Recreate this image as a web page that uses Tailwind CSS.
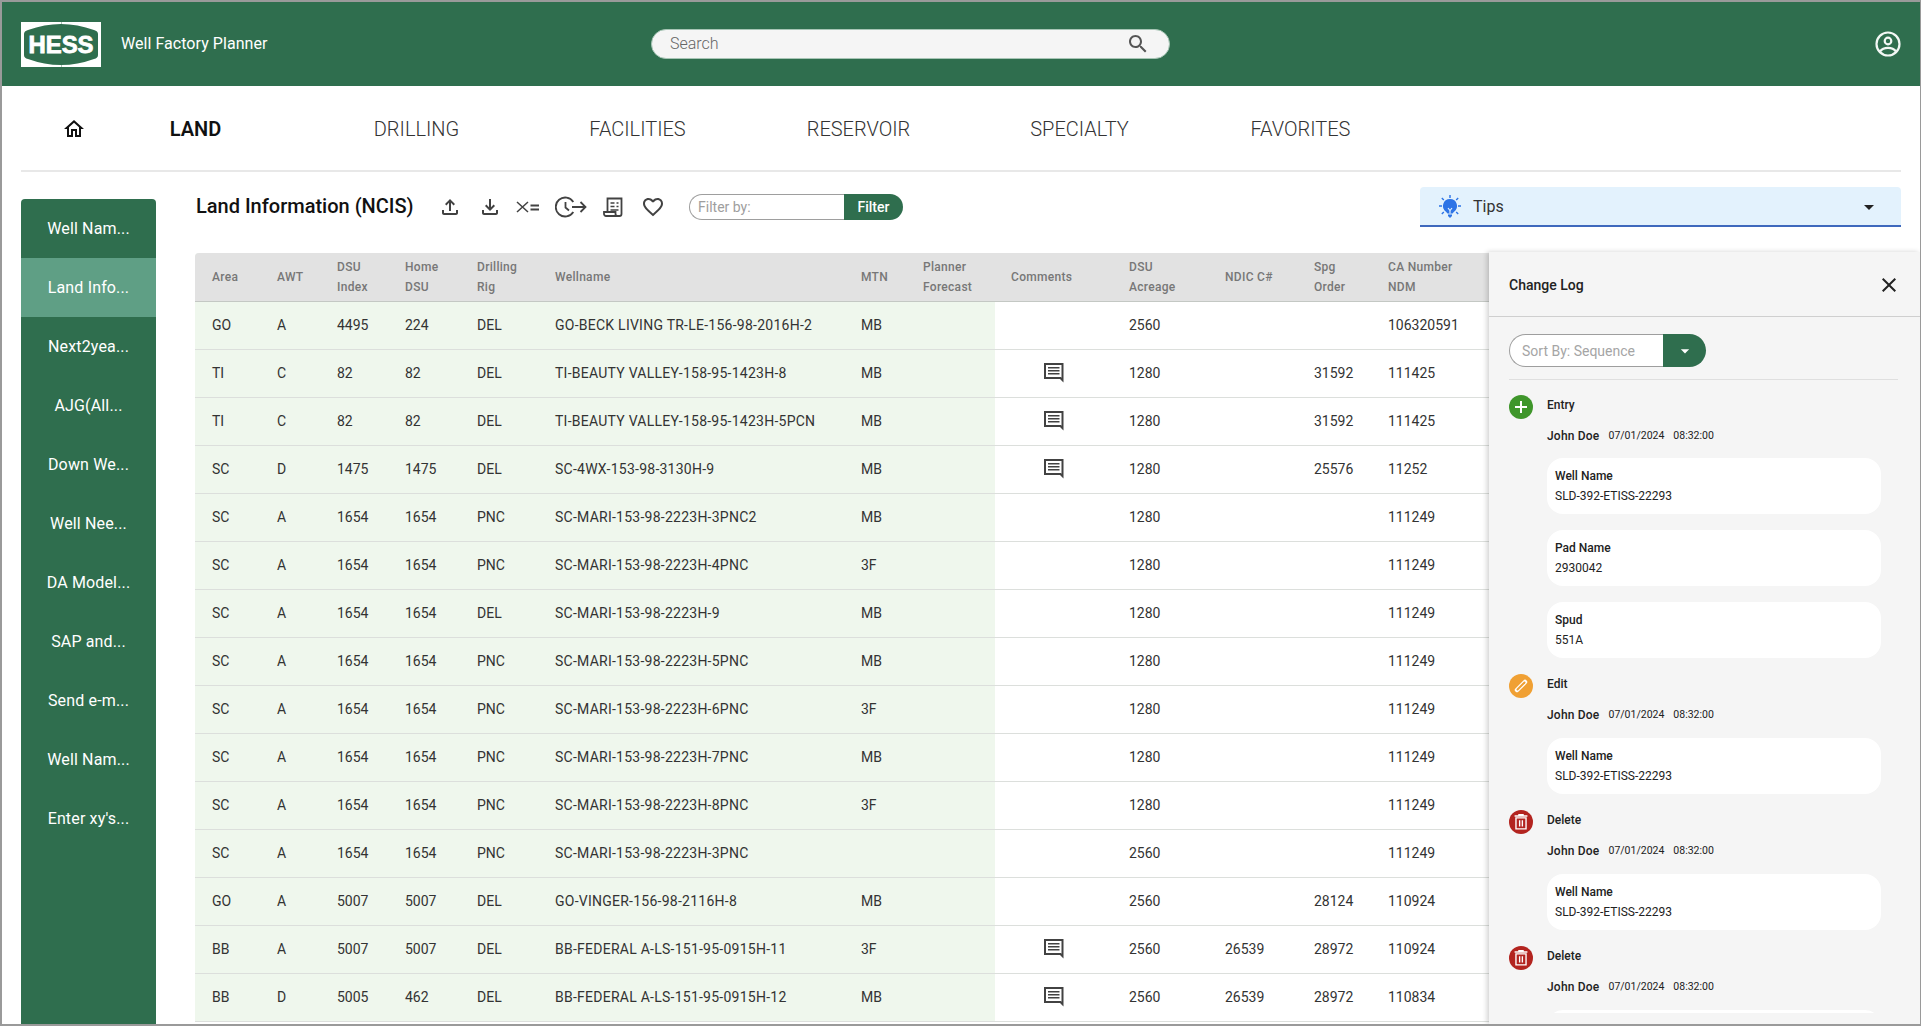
<!DOCTYPE html>
<html lang="en">
<head>
<meta charset="utf-8">
<title>Well Factory Planner</title>
<script src="https://cdn.jsdelivr.net/npm/@tailwindcss/browser@4"></script>
</head>
<body class="bg-white">
<svg class="hidden" xmlns="http://www.w3.org/2000/svg">
  <symbol id="cm" viewBox="0 0 24 24"><path fill="#424242" fill-rule="evenodd" d="M2 2h19.500v19.500L18 18H2zM4 4v12h14.800l.7.7V4zM6 6h11.500v1.500H6zM6 9h11.500v1.500H6zM6 12h11.500v1.500H6z"/></symbol>
  <symbol id="tr" viewBox="0 0 24 24"><g fill="none" stroke="#fff" stroke-width="1.500"><path d="M6.500 7.500h11v12h-11z"/><path d="M5 5.500h14M9 4h6M10.500 10v7M13.500 10v7"/></g></symbol>
</svg>
<div class="box-border w-[1921px] h-[1026px] overflow-hidden border-t-2 border-l-2 border-r border-b-2 border-[#9a9a9a] font-[family-name:Roboto,sans-serif] text-[#333]">

  <header class="h-[84px] bg-[#2f6e4e] flex items-center">
    <div class="w-[649px] pl-[19px] flex items-center">
      <svg width="80" height="45" viewBox="0 0 80 45" class="shrink-0">
        <rect width="80" height="45" fill="#fff"/>
        <path d="M3 12Q3 9 7 8Q40 -4 73 8Q77 9 77 12V33Q77 36 73 37Q40 49 7 37Q3 36 3 33Z" fill="#2f6e4e"/>
        <path d="M40.500 0v3M40.500 42v3" stroke="#2f6e4e" stroke-opacity="0.400"/>
        <text x="40" y="31" text-anchor="middle" textLength="65" lengthAdjust="spacingAndGlyphs" font-family="Liberation Sans" font-weight="700" font-size="23" fill="#fff" stroke="#fff" stroke-width="0.800">HESS</text>
      </svg>
      <span class="ml-5 text-base text-white tracking-[0.05px]">Well Factory Planner</span>
    </div>
    <div class="w-[519px] h-[30px] bg-[#f5f5f5] border border-[#a7c5b5] rounded-full flex items-center justify-between pl-[18px] pr-[19px]">
      <span class="text-base font-light text-[#666]">Search</span>
      <svg width="24" height="24" viewBox="0 0 24 24" fill="#555"><path d="M15.500 14h-.79l-.28-.27C15.410 12.590 16 11.110 16 9.500 16 5.910 13.090 3 9.500 3S3 5.910 3 9.500 5.910 16 9.500 16c1.610 0 3.090-.59 4.230-1.570l.27.28v.79l5 4.990L20.490 19l-4.990-5zm-6 0C7.010 14 5 11.990 5 9.500S7.010 5 9.500 5 14 7.010 14 9.500 11.990 14 9.500 14z"/></svg>
    </div>
    <div class="ml-auto pr-[18px] flex">
      <svg width="28" height="28" viewBox="0 0 28 28" fill="none" stroke="#f3f8f5" stroke-width="2.200"><circle cx="14" cy="14" r="11.500"/><circle cx="14" cy="11" r="3.300"/><path d="M6 21.500c2-2.800 5-3.700 8-3.700s6 .9 8 3.700"/></svg>
    </div>
  </header>

  <nav class="h-[84px] flex items-center pl-[59px] pt-[2px] text-[20px] font-light text-[#333]">
    <svg width="24" height="24" viewBox="0 0 24 24" fill="#111" class="shrink-0 ml-px -mr-px"><path d="M12 5.690l5 4.500V18h-2v-6H9v6H7v-7.810l5-4.500M12 3L2 12h3v8h6v-6h2v6h6v-8h3L12 3z"/></svg>
    <span class="w-[221px] text-center font-semibold text-[#111]">LAND</span>
    <span class="w-[221px] text-center">DRILLING</span>
    <span class="w-[221px] text-center">FACILITIES</span>
    <span class="w-[221px] text-center">RESERVOIR</span>
    <span class="w-[221px] text-center">SPECIALTY</span>
    <span class="w-[221px] text-center">FAVORITES</span>
  </nav>
  <div class="ml-[19px] w-[1880px] h-[2px] bg-[#e8e8e8]"></div>

  <div class="flex pl-[19px]">
    <aside class="w-[135px] h-[825px] mt-[27px] shrink-0 bg-[#2f6e4e] rounded-t text-white text-base text-center tracking-[0.15px]">
      <div class="h-[59px] flex items-center justify-center">Well Nam...</div>
      <div class="h-[59px] flex items-center justify-center bg-[#5f9f85]">Land Info...</div>
      <div class="h-[59px] flex items-center justify-center">Next2yea...</div>
      <div class="h-[59px] flex items-center justify-center">AJG(All...</div>
      <div class="h-[59px] flex items-center justify-center">Down We...</div>
      <div class="h-[59px] flex items-center justify-center">Well Nee...</div>
      <div class="h-[59px] flex items-center justify-center">DA Model...</div>
      <div class="h-[59px] flex items-center justify-center">SAP and...</div>
      <div class="h-[59px] flex items-center justify-center">Send e-m...</div>
      <div class="h-[59px] flex items-center justify-center">Well Nam...</div>
      <div class="h-[59px] flex items-center justify-center">Enter xy's...</div>
    </aside>

    <main class="ml-[39px] w-[1725px] pt-[15px]">
      <div class="h-[40px] flex items-center pl-px pr-[19px]">
        <h1 class="w-[218px] text-[20px] font-medium text-[#111] whitespace-nowrap mb-[2px]">Land Information (NCIS)</h1>
        <svg width="24" height="24" viewBox="0 0 24 24" fill="#424242" class="ml-6"><path d="M18 15v3H6v-3H4v3c0 1.100.9 2 2 2h12c1.100 0 2-.9 2-2v-3h-2zM7 9l1.410 1.410L11 7.830V16h2V7.830l2.590 2.580L17 9l-5-5-5 5z"/></svg>
        <svg width="24" height="24" viewBox="0 0 24 24" fill="#424242" class="ml-4"><path d="M18 15v3H6v-3H4v3c0 1.100.9 2 2 2h12c1.100 0 2-.9 2-2v-3h-2zm-1-4l-1.410-1.410L13 12.170V4h-2v8.170L8.410 9.590 7 11l5 5 5-5z"/></svg>
        <svg width="24" height="24" viewBox="0 0 24 24" fill="none" stroke="#424242" class="ml-[14px]"><path stroke-width="1.500" d="M1 7l11 10M12 7L1 17"/><path stroke-width="2" d="M14.500 10.500H23M14.500 14.500H23"/></svg>
        <svg width="32" height="24" viewBox="0 0 32 24" fill="none" stroke="#424242" stroke-width="1.800" class="ml-[15px]"><path d="M18.300 7A9.500 9.500 0 1 0 18.300 17"/><path d="M10.500 7v5.500l3.500 3M17 12h13.500M25.500 7l5 5-5 5"/></svg>
        <svg width="24" height="24" viewBox="0 0 24 24" fill="none" stroke="#424242" stroke-width="1.800" class="ml-[14px]"><path d="M6.500 17V3.500h14V19a2 2 0 0 1-2 2H5a2 2 0 0 1-2-2v-2h11.500v2a2 2 0 0 0 2 2"/><path stroke-width="1.600" d="M9.500 8h4M15.500 8h2M9.500 11.500h4M15.500 11.500h2M9.500 15h8"/></svg>
        <svg width="24" height="24" viewBox="0 0 24 24" fill="#424242" class="ml-4"><path d="M16.500 3c-1.740 0-3.410.81-4.500 2.090C10.910 3.810 9.240 3 7.500 3 4.420 3 2 5.420 2 8.500c0 3.780 3.400 6.860 8.550 11.540L12 21.350l1.450-1.320C18.600 15.360 22 12.280 22 8.500 22 5.420 19.580 3 16.500 3zm-4.400 15.550l-.1.100-.1-.1C7.140 14.240 4 11.390 4 8.500 4 6.500 5.500 5 7.500 5c1.540 0 3.040.99 3.570 2.360h1.870C13.460 5.990 14.960 5 16.500 5c2 0 3.500 1.500 3.500 3.500 0 2.890-3.140 5.740-7.900 10.050z"/></svg>
        <div class="ml-[24px] flex h-[26px] w-[214px]">
          <div class="w-[155px] box-border border border-r-0 border-[#9e9e9e] rounded-l-full pl-[8px] text-sm text-[#9e9e9e] flex items-center">Filter by:</div>
          <div class="w-[59px] bg-[#2f6e4e] rounded-r-full text-white text-sm font-medium flex items-center justify-center">Filter</div>
        </div>
        <div class="ml-auto w-[481px] h-[40px] box-border border-b-2 border-[#3f69bd] bg-[#e3f2fd] rounded-t flex items-center pt-[2px] pl-[18px] pr-[20px]">
          <svg width="24" height="26" viewBox="0 0 24 26">
            <path fill="#2d74e6" d="M12 5a7 7 0 0 0-3.800 12.900l1.300 1.600h5l1.300-1.600A7 7 0 0 0 12 5zM10 20.500h4V22l-2 2-2-2z"/>
            <path stroke="#2d74e6" stroke-width="1.400" d="M12 1v3M3.800 4l2 2M20.200 4l-2 2M1 12h3M20 12h3M3.800 20l2-2M20.200 20l-2-2"/>
            <path stroke="#e3f2fd" stroke-width="1.200" fill="none" d="M10 14l2 2.500 2-2.500M12 16.500v3"/>
          </svg>
          <span class="ml-[11px] text-base text-[#333]">Tips</span>
          <svg width="24" height="24" viewBox="0 0 24 24" fill="#222" class="ml-auto"><path d="M7 10l5 5 5-5z"/></svg>
        </div>
      </div>

      <div class="flex mt-[25px]">
        <div class="w-[1294px] shrink-0 pt-px">
          <table class="table-fixed w-[1294px] text-sm text-[#333] [&_td]:pl-[17px] [&_th]:pl-[17px] [&_td]:border-b [&_td]:border-[#dcdfdc] [&_td:nth-child(6)]:tracking-[0.25px]">
            <colgroup>
              <col class="w-[65px] bg-[#eff7ed]"><col class="w-[60px] bg-[#eff7ed]"><col class="w-[68px] bg-[#eff7ed]"><col class="w-[72px] bg-[#eff7ed]"><col class="w-[78px] bg-[#eff7ed]"><col class="w-[306px] bg-[#eff7ed]"><col class="w-[62px] bg-[#eff7ed]"><col class="w-[89px] bg-[#eff7ed]"><col class="w-[117px]"><col class="w-[96px]"><col class="w-[89px]"><col class="w-[74px]"><col class="w-[118px]">
            </colgroup>
            <thead>
              <tr class="h-[48px] bg-[#e2e2e2] text-left text-xs leading-5 text-[#777] tracking-[0.3px] border-b border-[#c4c8c4]">
                <th class="font-medium rounded-tl">Area</th><th class="font-medium">AWT</th><th class="font-medium">DSU<br>Index</th><th class="font-medium">Home<br>DSU</th><th class="font-medium">Drilling<br>Rig</th><th class="font-medium">Wellname</th><th class="font-medium">MTN</th><th class="font-medium">Planner<br>Forecast</th><th class="font-medium"><span class="block -ml-px">Comments</span></th><th class="font-medium">DSU<br>Acreage</th><th class="font-medium">NDIC C#</th><th class="font-medium">Spg<br>Order</th><th class="font-medium">CA Number<br>NDM</th>
              </tr>
            </thead>
            <tbody>
              <tr class="h-[48px]"><td>GO</td><td>A</td><td>4495</td><td>224</td><td>DEL</td><td>GO-BECK LIVING TR-LE-156-98-2016H-2</td><td>MB</td><td></td><td></td><td>2560</td><td></td><td></td><td>106320591</td></tr>
              <tr class="h-[48px]"><td>TI</td><td>C</td><td>82</td><td>82</td><td>DEL</td><td>TI-BEAUTY VALLEY-158-95-1423H-8</td><td>MB</td><td></td><td><svg width="24" height="24" class="block ml-[30px]"><use href="#cm"/></svg></td><td>1280</td><td></td><td>31592</td><td>111425</td></tr>
              <tr class="h-[48px]"><td>TI</td><td>C</td><td>82</td><td>82</td><td>DEL</td><td>TI-BEAUTY VALLEY-158-95-1423H-5PCN</td><td>MB</td><td></td><td><svg width="24" height="24" class="block ml-[30px]"><use href="#cm"/></svg></td><td>1280</td><td></td><td>31592</td><td>111425</td></tr>
              <tr class="h-[48px]"><td>SC</td><td>D</td><td>1475</td><td>1475</td><td>DEL</td><td>SC-4WX-153-98-3130H-9</td><td>MB</td><td></td><td><svg width="24" height="24" class="block ml-[30px]"><use href="#cm"/></svg></td><td>1280</td><td></td><td>25576</td><td>11252</td></tr>
              <tr class="h-[48px]"><td>SC</td><td>A</td><td>1654</td><td>1654</td><td>PNC</td><td>SC-MARI-153-98-2223H-3PNC2</td><td>MB</td><td></td><td></td><td>1280</td><td></td><td></td><td>111249</td></tr>
              <tr class="h-[48px]"><td>SC</td><td>A</td><td>1654</td><td>1654</td><td>PNC</td><td>SC-MARI-153-98-2223H-4PNC</td><td>3F</td><td></td><td></td><td>1280</td><td></td><td></td><td>111249</td></tr>
              <tr class="h-[48px]"><td>SC</td><td>A</td><td>1654</td><td>1654</td><td>DEL</td><td>SC-MARI-153-98-2223H-9</td><td>MB</td><td></td><td></td><td>1280</td><td></td><td></td><td>111249</td></tr>
              <tr class="h-[48px]"><td>SC</td><td>A</td><td>1654</td><td>1654</td><td>PNC</td><td>SC-MARI-153-98-2223H-5PNC</td><td>MB</td><td></td><td></td><td>1280</td><td></td><td></td><td>111249</td></tr>
              <tr class="h-[48px]"><td>SC</td><td>A</td><td>1654</td><td>1654</td><td>PNC</td><td>SC-MARI-153-98-2223H-6PNC</td><td>3F</td><td></td><td></td><td>1280</td><td></td><td></td><td>111249</td></tr>
              <tr class="h-[48px]"><td>SC</td><td>A</td><td>1654</td><td>1654</td><td>PNC</td><td>SC-MARI-153-98-2223H-7PNC</td><td>MB</td><td></td><td></td><td>1280</td><td></td><td></td><td>111249</td></tr>
              <tr class="h-[48px]"><td>SC</td><td>A</td><td>1654</td><td>1654</td><td>PNC</td><td>SC-MARI-153-98-2223H-8PNC</td><td>3F</td><td></td><td></td><td>1280</td><td></td><td></td><td>111249</td></tr>
              <tr class="h-[48px]"><td>SC</td><td>A</td><td>1654</td><td>1654</td><td>PNC</td><td>SC-MARI-153-98-2223H-3PNC</td><td></td><td></td><td></td><td>2560</td><td></td><td></td><td>111249</td></tr>
              <tr class="h-[48px]"><td>GO</td><td>A</td><td>5007</td><td>5007</td><td>DEL</td><td>GO-VINGER-156-98-2116H-8</td><td>MB</td><td></td><td></td><td>2560</td><td></td><td>28124</td><td>110924</td></tr>
              <tr class="h-[48px]"><td>BB</td><td>A</td><td>5007</td><td>5007</td><td>DEL</td><td>BB-FEDERAL A-LS-151-95-0915H-11</td><td>3F</td><td></td><td><svg width="24" height="24" class="block ml-[30px]"><use href="#cm"/></svg></td><td>2560</td><td>26539</td><td>28972</td><td>110924</td></tr>
              <tr class="h-[48px]"><td>BB</td><td>D</td><td>5005</td><td>462</td><td>DEL</td><td>BB-FEDERAL A-LS-151-95-0915H-12</td><td>MB</td><td></td><td><svg width="24" height="24" class="block ml-[30px]"><use href="#cm"/></svg></td><td>2560</td><td>26539</td><td>28972</td><td>110834</td></tr>
            </tbody>
          </table>
        </div>

        <section class="w-[431px] h-[772px] bg-[#f5f5f5] shadow-[-2px_0_5px_rgba(0,0,0,0.18)] relative text-xs text-[#222]">
          <div class="h-[65px] box-border border-b border-[#cfcfcf] flex items-center justify-between pt-[2px] pl-5 pr-[19px]">
            <h2 class="text-sm font-medium text-[#222]">Change Log</h2>
            <svg width="24" height="24" viewBox="0 0 24 24" fill="#222"><path d="M19 6.410L17.590 5 12 10.590 6.410 5 5 6.410 10.590 12 5 17.590 6.410 19 12 13.410 17.590 19 19 17.590 13.410 12z"/></svg>
          </div>
          <div class="pl-5 pr-[22px] pt-[17px]">
            <div class="flex w-[197px] h-[33px]">
              <div class="w-[154px] box-border bg-white border border-r-0 border-[#9e9e9e] rounded-l-full pl-3 flex items-center text-sm text-[#a5a5a5]">Sort By: Sequence</div>
              <div class="w-[43px] bg-[#2f6e4e] rounded-r-full flex items-center justify-center"><svg width="20" height="20" viewBox="0 0 24 24" fill="#fff"><path d="M7 10l5 5 5-5z"/></svg></div>
            </div>
            <div class="h-px bg-[#dfdfdf] mt-[12px]"></div>
          </div>
          <div class="h-[633px] overflow-hidden pl-5 pt-[15px] flex flex-col gap-4">

            <div class="shrink-0">
              <div class="flex h-[33px]">
                <div class="w-6 h-6 rounded-full bg-[#3f962b] flex items-center justify-center"><svg width="16" height="16" viewBox="0 0 16 16" stroke="#fff" stroke-width="2"><path d="M8 2v12M2 8h12"/></svg></div>
                <span class="ml-[14px] leading-5 font-medium">Entry</span>
              </div>
              <div class="pl-[38px] h-4 flex items-center"><span class="font-medium tracking-[0.2px]">John Doe</span><span class="ml-[9px] text-[10.5px]">07/01/2024</span><span class="ml-[9px] text-[10.5px]">08:32:00</span></div>
              <div class="pl-[38px] mt-[14px] flex flex-col gap-4">
                <div class="w-[334px] h-[56px] rounded-2xl bg-white pl-2 pt-[8px] leading-5"><div class="font-medium">Well Name</div><div>SLD-392-ETISS-22293</div></div>
                <div class="w-[334px] h-[56px] rounded-2xl bg-white pl-2 pt-[8px] leading-5"><div class="font-medium">Pad Name</div><div>2930042</div></div>
                <div class="w-[334px] h-[56px] rounded-2xl bg-white pl-2 pt-[8px] leading-5"><div class="font-medium">Spud</div><div>551A</div></div>
              </div>
            </div>

            <div class="shrink-0">
              <div class="flex h-[33px]">
                <div class="w-6 h-6 rounded-full bg-[#f0a033] flex items-center justify-center"><svg width="16" height="16" viewBox="0 0 16 16" fill="none" stroke-linecap="round"><path d="M4 12l8-8" stroke="#fff" stroke-width="4.500"/><path d="M4.500 11.500l7-7" stroke="#f0a033" stroke-width="2"/></svg></div>
                <span class="ml-[14px] leading-5 font-medium">Edit</span>
              </div>
              <div class="pl-[38px] h-4 flex items-center"><span class="font-medium tracking-[0.2px]">John Doe</span><span class="ml-[9px] text-[10.5px]">07/01/2024</span><span class="ml-[9px] text-[10.5px]">08:32:00</span></div>
              <div class="pl-[38px] mt-[15px]">
                <div class="w-[334px] h-[56px] rounded-2xl bg-white pl-2 pt-[8px] leading-5"><div class="font-medium">Well Name</div><div>SLD-392-ETISS-22293</div></div>
              </div>
            </div>

            <div class="shrink-0">
              <div class="flex h-[33px]">
                <div class="w-6 h-6 rounded-full bg-[#b3241f] flex items-center justify-center"><svg width="22" height="22"><use href="#tr"/></svg></div>
                <span class="ml-[14px] leading-5 font-medium">Delete</span>
              </div>
              <div class="pl-[38px] h-4 flex items-center"><span class="font-medium tracking-[0.2px]">John Doe</span><span class="ml-[9px] text-[10.5px]">07/01/2024</span><span class="ml-[9px] text-[10.5px]">08:32:00</span></div>
              <div class="pl-[38px] mt-[15px]">
                <div class="w-[334px] h-[56px] rounded-2xl bg-white pl-2 pt-[8px] leading-5"><div class="font-medium">Well Name</div><div>SLD-392-ETISS-22293</div></div>
              </div>
            </div>

            <div class="shrink-0">
              <div class="flex h-[33px]">
                <div class="w-6 h-6 rounded-full bg-[#b3241f] flex items-center justify-center"><svg width="22" height="22"><use href="#tr"/></svg></div>
                <span class="ml-[14px] leading-5 font-medium">Delete</span>
              </div>
              <div class="pl-[38px] h-4 flex items-center"><span class="font-medium tracking-[0.2px]">John Doe</span><span class="ml-[9px] text-[10.5px]">07/01/2024</span><span class="ml-[9px] text-[10.5px]">08:32:00</span></div>
              <div class="pl-[38px] mt-[15px]">
                <div class="w-[334px] h-[56px] rounded-2xl bg-white"></div>
              </div>
            </div>
          </div>
        </section>
      </div>
    </main>
  </div>
</div>
</body>
</html>
